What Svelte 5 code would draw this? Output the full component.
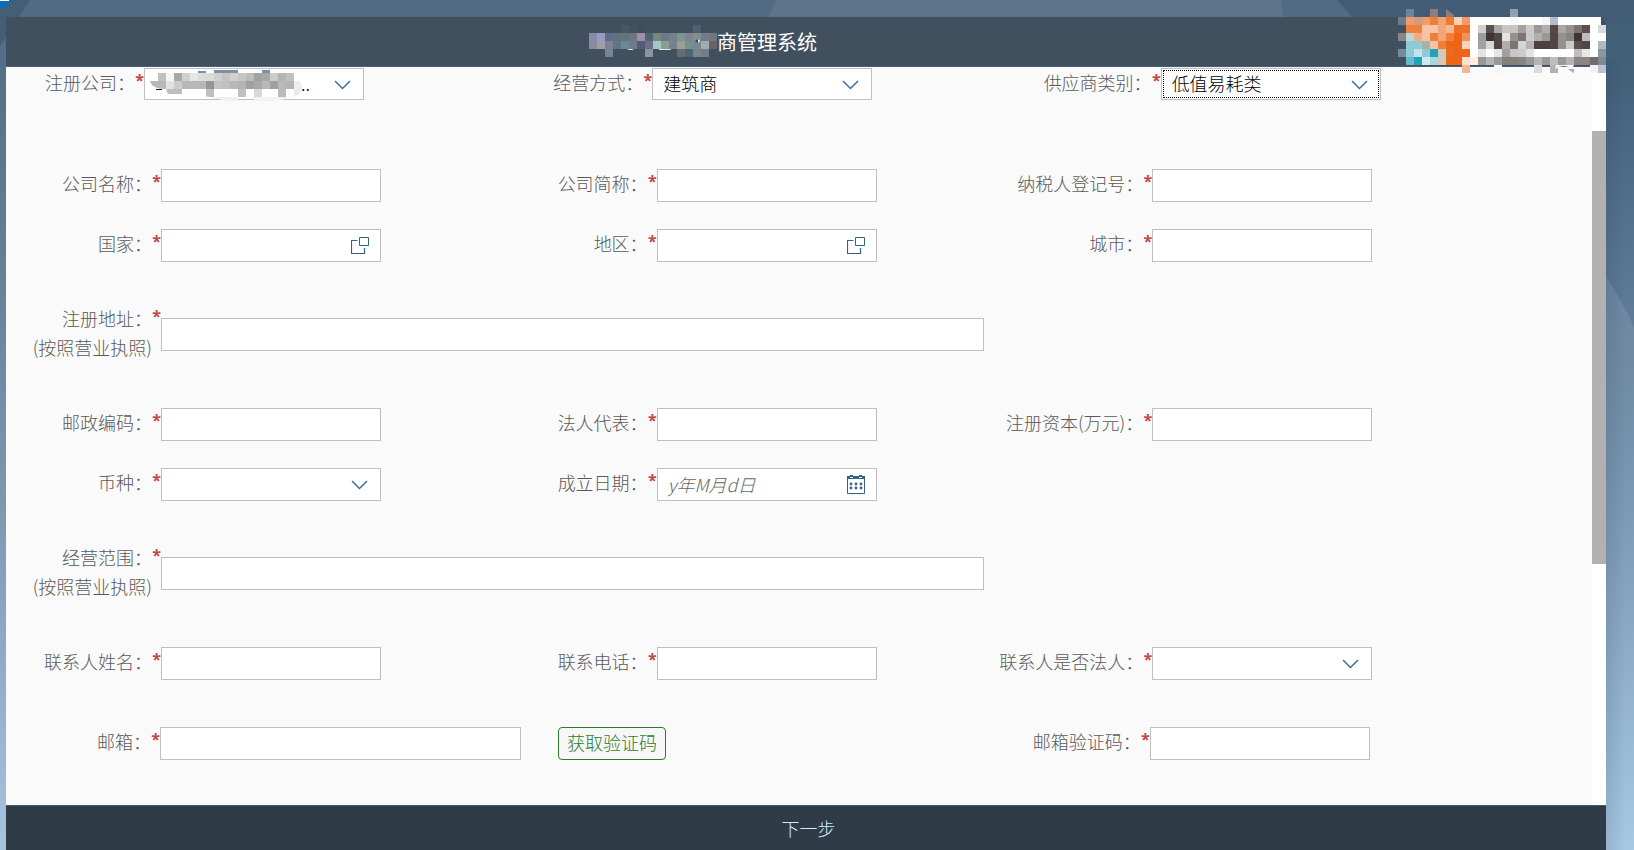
<script>
  const titleMask = [
    [0, 8, '#7f8fae #9a9ac0 #5f6e88 #63707f #65727c #707585 #9c90a5 #53626f #738a80 #6f7889 #74828d #7a948f #84808f #858e8e #747a88 #6f7784'],
    [0, 16, '#8c8a9e #a09fa2 #7b8296 #5f7785 #68899a #6f7a8b #545a7b #6b7088 #a4c6c8 #8a9e90 #7a8090 #9a9f94 #72938a #7a8894 #a3adb0 #686464'],
    [2, 24, '#7b8296'],
    [7, 24, '#8c94a0'],
    [11, 24, '#666c70 #4e6478 #7a8489 #737c8c'],
    [4, 0, '#465765 #43525f #3d4e5c'],
    [13, 0, '#4a6076']
  ];

  const companyMask = [
    [1, 8, '#c0c0c0 #f5f5f5 #a8a8a8 #d0d0d0 #e5e5e5 #dcdcdc #dcdcdc #d0d0d0 #c4c4c4 #d0d0d0 #c6c6c6 #bcbcbc #a2a2a2 #a8a8a8 #cccccc #b4b4b4 #c0c0c0'],
    [0, 16, '#b8b8b8 #b8b8b8 #e0e0e0 #cccccc #b8b8b8 #b8b8b8 #b8b8b8 #969696 #c4c4c4 #c0c0c0 #b8b8b8 #b4b4b4 #a0a0a0 #a8a8a8 #b8b8b8 #a0a0a0 #b8b8b8 #b4b4b4 #ededed'],
    [2, 24, '#bdbdbd #bdbdbd #ffffff #ffffff #ffffff #c0c0c0 #ffffff #ffffff #ffffff #c0c0c0 #ffffff #d8d8d8 #ffffff #ffffff #bcbcbc #ffffff #ececec'],
    [7, 32, '#efefef #efefef #efefef #efefef'],
    [13, 32, '#f2f2f2 #f2f2f2 #f2f2f2 #f4f4f4']
  ];

  const logoCells = [
    [1, 0, '#6b85a0'], [4, 0, '#8d7d7c'], [14, 0, '#8fa2b2'],
    [0, 8, '#6b7c8d #f39a68 #d29a7e #f39a68 #f07f3a #f3a274 #f07a30 #fad2bb #f39a68'],
    [14, 8, '#f8f8f8'], [18, 8, '#f5f5f5 #b2bfca'],
    [1, 16, '#f07f3a #f08040 #f6c3a6 #f6c3a6 #f4a478 #f6b893 #ed7028 #ed7028'],
    [10, 16, '#d0d0d0 #5b504f #aaa8a7 #c6c6c6 #c4c4c4 #a4a2a1 #cbcbcb #9a9796 #b0aeae #524847 #a8a5a4 #96918f #7a7371 #5b504f #ffffff #d5dade'],
    [0, 24, '#8d8583 #b6d9d6 #f4ab82 #f6c3a6 #f07f3a #f4a478 #f07f3a #ed6517 #f19259'],
    [10, 24, '#9e9b9b #403434 #524645 #e3e3e3 #979292 #7c7573 #c9c9c9 #b0aeae #9a9796 #524645 #96918f #8a8583 #403434 #bebcbc #ffffff #ffffff'],
    [1, 32, '#8dccd6 #8dccd6 #a9b2a0 #f6c3a6 #f07f3a #ed6517 #ed6517 #fad2bb'],
    [10, 32, '#a2a0a0 #d8d8d8 #524645 #b0aeae #7c7573 #d5d5d5 #b5b3b3 #4b403f #4b403f #524645 #968f8d #cbcbcb #5b504f #524645 #ffffff #b0b8c0'],
    [0, 40, '#778c96 #8dccd6 #c4e3e8 #8dccd6 #20a3b8 #d0cabb #ee6a20 #ed6517 #ed6517'],
    [10, 40, '#e3e3e3 #ffffff #e5e5e5 #a2a0a0 #c6c6c6 #cccccc #e3e3e3 #ffffff #ffffff #ffffff #ffffff #ffffff #bebcbc #e8e8e8 #ffffff #8a97a3'],
    [1, 48, '#62bccb #20a3b8 #cdeaee #a5d8e0 #d4c9b8 #ed6517 #ed6517 #fde0d0 #fdeee6 #9a9796 #b5b3b3 #9a9796 #85807e #85807e #8a8583 #9a9796 #b5b3b3 #9a9796 #bebcbc #9a9796 #b5b3b3 #8a8583 #8a8583 #746c6a #7f8a95'],
    [8, 56, '#f6b590'], [12, 56, '#f3f5f7'], [17, 56, '#dcdcdc'], [19, 56, '#b4b2b1'], [24, 56, '#f0f2f4 #b9c3cf']
  ];

  const cells = (runs) =>
    runs.flatMap(([col, y, colors]) =>
      colors.split(' ').map((fill, i) => ({ x: (col + i) * 8, y, fill }))
    );

  const field = (id, label, kind = 'text', extra = {}) => ({ id, label, kind, ...extra });

  const rows = [
    {
      cls: 'filters',
      fields: [
        field('register-company', '注册公司：', 'select', { value: '..', masked: true }),
        field('business-mode', '经营方式：', 'select', { value: '建筑商' }),
        field('supplier-type', '供应商类别：', 'select', { value: '低值易耗类', active: true })
      ]
    },
    {
      cls: 'first',
      fields: [field('name', '公司名称：'), field('short-name', '公司简称：'), field('tax-no', '纳税人登记号：')]
    },
    {
      cls: 'near',
      fields: [field('country', '国家：', 'lookup'), field('region', '地区：', 'lookup'), field('city', '城市：')]
    },
    { cls: 'tall', fields: [field('address', '注册地址：', 'text', { note: '(按照营业执照)', wide: true })] },
    {
      cls: 'after',
      fields: [field('postcode', '邮政编码：'), field('legal-person', '法人代表：'), field('capital', '注册资本(万元)：')]
    },
    {
      cls: 'near',
      fields: [field('currency', '币种：', 'select', { value: '' }), field('founded', '成立日期：', 'date')]
    },
    { cls: 'tall', fields: [field('scope', '经营范围：', 'text', { note: '(按照营业执照)', wide: true })] },
    {
      cls: 'after',
      fields: [
        field('contact-name', '联系人姓名：'),
        field('contact-phone', '联系电话：'),
        field('contact-legal', '联系人是否法人：', 'select', { value: '' })
      ]
    },
    {
      cls: 'mail',
      fields: [field('email', '邮箱：', 'text', { action: '获取验证码' }), field('email-code', '邮箱验证码：')]
    }
  ];
</script>

<div class="page">
  <svg class="backdrop" viewBox="0 0 1634 850" preserveAspectRatio="none" aria-hidden="true">
    <defs>
      <linearGradient id="sky" x1="0" y1="0" x2="0" y2="1">
        <stop offset="0" stop-color="#4f6a82" />
        <stop offset="0.3" stop-color="#637f98" />
        <stop offset="0.6" stop-color="#7e98b2" />
        <stop offset="1" stop-color="#a6c4e0" />
      </linearGradient>
      <linearGradient id="side" x1="0" y1="0" x2="0" y2="1">
        <stop offset="0" stop-color="#415c74" />
        <stop offset="0.1" stop-color="#45627b" />
        <stop offset="0.3" stop-color="#577491" />
        <stop offset="0.45" stop-color="#66849f" />
        <stop offset="0.7" stop-color="#87a5c0" />
        <stop offset="1" stop-color="#a8c8e3" />
      </linearGradient>
      <linearGradient id="edge" x1="0" y1="0" x2="1" y2="0">
        <stop offset="0" stop-color="#20384c" stop-opacity="0.14" />
        <stop offset="1" stop-color="#20384c" stop-opacity="0" />
      </linearGradient>
      <linearGradient id="facet" x1="0" y1="0" x2="0" y2="1">
        <stop offset="0" stop-color="#8d9fb5" stop-opacity="0.4" />
        <stop offset="1" stop-color="#8d9fb5" stop-opacity="0" />
      </linearGradient>
    </defs>
    <rect width="1634" height="850" fill="url(#sky)" />
    <path d="M0 0H30L0 46Z" fill="#435f76" />
    <path d="M0 0H11C9 4 7 8 0 8Z" fill="#0a6cbd" />
    <path d="M0 0H9V1H0Z" fill="#ffffff" />
    <path d="M776 0H1281L1283 17H769Z" fill="#5e748b" />
    <path d="M1337 0H1634V850H1606V60H1390Z" fill="url(#side)" />
    <path d="M1606 277Q1622 300 1634 327V700H1606Z" fill="url(#facet)" />
    <rect x="1606" y="60" width="20" height="790" fill="url(#edge)" />
  </svg>

  <div class="panel">
    <header>
      <h1>
        <svg class="title-mask" viewBox="0 0 128 34" aria-hidden="true">
          {#each cells(titleMask) as c}
            <rect x={c.x} y={c.y} width="8" height="8" fill={c.fill} />
          {/each}
          <path d="M106 16L109 14V18Z" fill="#1f4a70" />
          <path d="M109 14L111 16L109 18Z" fill="#ffffff" />
          <path d="M70 24H82V25H70ZM38 24H45L43 25H40Z" fill="#dfe6ea" />
        </svg>
        商管理系统
      </h1>
      <svg class="logo" viewBox="0 0 208 64" aria-hidden="true">
        <rect x="72" y="8" width="131" height="48" fill="#ffffff" />
        {#each cells(logoCells) as c}
          <rect x={c.x} y={c.y} width="8" height="8" fill={c.fill} />
        {/each}
        <path d="M48 0L56 6V8H48Z" fill="#8d7d7c" />
        <path d="M203 8H208V14Z" fill="#3f586f" />
        <path d="M157 60Q166 54 174 60L176 56H158Z" fill="#f4f4f4" />
        <path d="M171 60H176V64L171 61Z" fill="#b0adac" />
      </svg>
    </header>

    <div class="body">
      <form onsubmit={(e) => e.preventDefault()}>
        {#each rows as row}
          <div class="row {row.cls}">
            {#each row.fields as f}
              <div class="field" class:wide={f.wide} class:email={f.action}>
                <label for={f.id}>{f.label}{#if f.note}<br /><span class="note">{f.note}</span>{/if}</label>
                <span class="star" aria-hidden="true">*</span>
                <div class="control">
                  {#if f.kind === 'select'}
                    <select id={f.id} class:masked={f.masked} class:active={f.active} required>
                      <option>{f.value}</option>
                    </select>
                    <svg class="chevron" viewBox="0 0 17 10" aria-hidden="true">
                      <path d="M1 1L8.500 8.500L16 1" fill="none" stroke="#3c6d9c" stroke-width="1.500" />
                    </svg>
                    {#if f.masked}
                      <svg class="company-mask" viewBox="0 0 152 38" aria-hidden="true">
                        <defs>
                          <clipPath id="brush">
                            <path d="M0 8H8V2H136L144 8V14Q152 16 152 22Q152 30 144 32Q132 36 112 36Q80 38 60 32L36 29H18L16 24Q2 24 0 16Z" />
                          </clipPath>
                        </defs>
                        <g clip-path="url(#brush)">
                          <path d="M48 6H56V8H48ZM64 5H88V8H64ZM112 5H120V8H112Z" fill="#7d93a5" />
                          {#each cells(companyMask) as c}
                            <rect x={c.x} y={c.y} width="8" height="8" fill={c.fill} />
                          {/each}
                        </g>
                        <path d="M6 24H12V25H6Z" fill="#111111" />
                      </svg>
                    {/if}
                  {:else if f.kind === 'lookup'}
                    <input id={f.id} type="text" required />
                    <button type="button" class="icon" aria-label={f.label}>
                      <svg viewBox="0 0 18 18" width="18" height="18">
                        <path d="M8.500 0.500H17.500V8.500H8.500Z" fill="none" stroke="#346187" />
                        <path d="M6.500 3.500H0.500V16.500H13.500V11" fill="none" stroke="#346187" stroke-width="1.200" />
                      </svg>
                    </button>
                  {:else if f.kind === 'date'}
                    <input id={f.id} type="text" placeholder="y年M月d日" required />
                    <button type="button" class="icon" aria-label={f.label}>
                      <svg viewBox="0 0 18 19" width="18" height="19">
                        <path d="M0.500 1.500H17.500V18.500H0.500Z" fill="none" stroke="#346187" />
                        <path d="M0 1H18V4H0Z" fill="#346187" />
                        <path d="M3 0H6V2H3ZM12 0H15V2H12Z" fill="#346187" />
                        <path d="M3 2H6V3H3ZM12 2H15V3H12Z" fill="#ffffff" />
                        <g fill="#346187">
                          {#each [4, 9, 14] as cx}
                            {#each [9, 13] as cy}
                              <circle {cx} {cy} r="1.400" />
                            {/each}
                          {/each}
                        </g>
                      </svg>
                    </button>
                  {:else}
                    <input id={f.id} type="text" required />
                  {/if}
                </div>
                {#if f.action}
                  <button type="button" class="code">{f.action}</button>
                {/if}
              </div>
            {/each}
          </div>
        {/each}
      </form>
      <div class="track" aria-hidden="true">
        <div class="thumb"></div>
      </div>
    </div>

    <footer>
      <button type="button" class="next">下一步</button>
    </footer>
  </div>
</div>

<style>
  :global(body) {
    margin: 0;
    font-family: 'Noto Sans CJK SC', sans-serif;
    font-weight: 300;
  }

  .page {
    position: relative;
    display: flex;
    box-sizing: border-box;
    min-height: 100vh;
    padding: 17px 28px 0 6px;
    font-size: 18px;
    line-height: 29px;
  }

  .backdrop {
    position: absolute;
    inset: 0;
    width: 100%;
    height: 100%;
  }

  .panel {
    position: relative;
    flex: 1;
    min-width: 0;
    display: flex;
    flex-direction: column;
  }

  header {
    position: relative;
    display: flex;
    align-items: center;
    height: 50px;
    padding-right: 206px;
    box-sizing: border-box;
    background: #40505f;
    border-bottom: 1px solid #46607c;
  }

  h1 {
    flex: 1;
    display: flex;
    justify-content: center;
    align-items: center;
    margin: 0;
    font-size: 20px;
    font-weight: 400;
    color: #ffffff;
  }

  .title-mask {
    width: 128px;
    height: 34px;
  }

  .logo {
    position: absolute;
    top: -8px;
    right: 0;
    z-index: 2;
    width: 208px;
    height: 64px;
  }

  .body {
    flex: 1;
    display: flex;
    background: #fafafa;
  }

  form {
    flex: 1;
    min-width: 0;
    padding: 1px 0 45px;
  }

  .track {
    display: flex;
    flex-direction: column;
    width: 14px;
    background: #ffffff;
  }

  .track::before {
    content: '';
    flex: 64;
  }

  .thumb {
    flex: 432;
    background: #b1b1b1;
  }

  .track::after {
    content: '';
    flex: 241;
  }

  .row {
    --label: 146px;
    --control: 33px;
    display: grid;
    grid-template-columns: 31.25% 31.25% 1fr;
  }

  .filters {
    --label: 129px;
    --control: 32px;
    grid-template-columns: 32.05% 32.05% 1fr;
  }

  .first {
    margin-top: 69px;
  }

  .near {
    margin-top: 27px;
  }

  .tall {
    margin-top: 42px;
  }

  .after {
    margin-top: 46px;
  }

  .mail {
    --label: 145px;
    grid-template-columns: 62.4% 1fr;
    margin-top: 47px;
  }

  .field {
    display: flex;
    align-items: flex-start;
  }

  .field.wide {
    grid-column: 1 / 3;
  }

  label {
    flex: 0 0 var(--label);
    text-align: right;
    white-space: nowrap;
    color: #595959;
  }

  .star {
    flex: 0 0 9px;
    min-width: 0;
    font-family: 'Open Sans', sans-serif;
    font-size: 16px;
    font-weight: 700;
    line-height: 25px;
    text-align: right;
    color: #c4474a;
  }

  .control {
    position: relative;
    flex: 0 0 220px;
    height: var(--control);
  }

  .wide .control {
    flex: 0 1 823px;
    margin-top: 14px;
  }

  .email .control {
    flex: 0 1 361px;
  }

  input,
  select {
    display: block;
    box-sizing: border-box;
    width: 100%;
    height: 100%;
    margin: 0;
    padding: 0 10px 2px;
    border: 1px solid #bfbfbf;
    border-radius: 0;
    background: #ffffff;
    color: #000000;
    font: inherit;
    appearance: none;
  }

  input::placeholder {
    color: #666666;
    font-style: italic;
    opacity: 1;
  }

  select.masked {
    padding-left: 156px;
  }

  select.active {
    outline: 1px dotted #000000;
    outline-offset: -3px;
  }

  .chevron {
    position: absolute;
    top: 12px;
    right: 13px;
    width: 17px;
    height: 10px;
    pointer-events: none;
  }

  .company-mask {
    position: absolute;
    top: -3px;
    left: 6px;
    z-index: 1;
    width: 152px;
    height: 38px;
    pointer-events: none;
  }

  .icon {
    position: absolute;
    top: 0;
    right: 0;
    display: flex;
    align-items: center;
    height: 100%;
    padding: 0 12px;
    border: 0;
    background: none;
  }

  .code {
    height: 33px;
    margin-left: 37px;
    padding: 0 8px 2px;
    border: 1px solid #2b7c2b;
    border-radius: 4px;
    background: #f7f7f7;
    color: #2b7c2b;
    font: inherit;
    line-height: 29px;
    white-space: nowrap;
  }

  footer {
    display: flex;
    justify-content: center;
    height: 46px;
    padding-left: 5px;
    box-sizing: border-box;
    background: #2f3c48;
    border-top: 1px solid #43596c;
  }

  .next {
    padding: 0 14px;
    border: 0;
    background: none;
    color: #d5eaff;
    font: inherit;
  }
</style>
